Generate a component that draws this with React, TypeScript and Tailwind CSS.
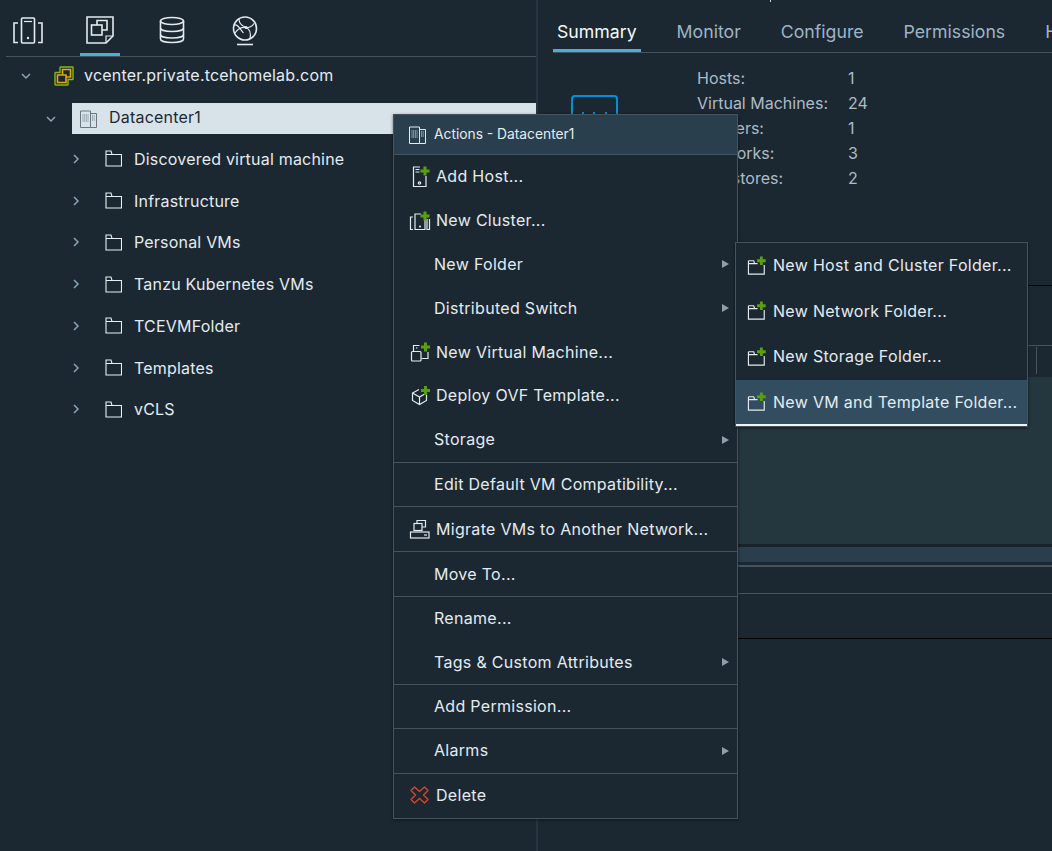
import type { ReactNode } from 'react'

function GreenPlus({ x, y }: { x: number; y: number }) {
  return <path d={`M${x - 4.5} ${y}h9M${x} ${y - 4.5}v9`} stroke="#5c9e12" strokeWidth="3" fill="none" />
}

function HostsTabIcon() {
  return (
    <svg width="32" height="28" viewBox="0 0 32 28" fill="none" stroke="#e4eaee" strokeWidth="1.6">
      <rect x="9.5" y="1" width="13" height="25" rx="1" />
      <path d="M12 4.5h8" strokeWidth="1.2" />
      <circle cx="16" cy="21" r="1.2" fill="#e4eaee" stroke="none" />
      <path d="M6 6H2v19.5h4M26 6h4v19.5h-4" />
    </svg>
  )
}

function VmsTabIcon() {
  return (
    <svg width="28" height="28" viewBox="0 0 28 28" fill="none" stroke="#e4eaee" strokeWidth="1.6">
      <path d="M1 1h26v19l-7 7H1z" />
      <path d="M27 20h-7v7" strokeWidth="1.2" />
      <path d="M11 9V4.5h10V14h-5" />
      <rect x="5.5" y="9" width="10.5" height="10" />
    </svg>
  )
}

function StorageTabIcon() {
  return (
    <svg width="26" height="28" viewBox="0 0 26 28" fill="none" stroke="#e4eaee" strokeWidth="1.6">
      <ellipse cx="13" cy="5" rx="11.5" ry="3.5" />
      <path d="M1.5 5v18c0 2 5 3.5 11.5 3.5S24.500 25 24.500 23V5" />
      <path d="M1.500 12c0 2 5 3.500 11.500 3.500S24.500 14 24.500 12M1.500 18.500c0 2 5 3.500 11.500 3.500s11.500-1.500 11.500-3.500" />
    </svg>
  )
}

function NetworkTabIcon() {
  return (
    <svg width="26" height="30" viewBox="0 0 26 30" fill="none" stroke="#e4eaee" strokeWidth="1.6">
      <circle cx="13" cy="12.500" r="11.500" />
      <path d="M3 17c2-3 6-6 11-5.500 4 .5 6-1 8-4M7 3c0 4 3 7 7 8.500s5 6 4 11.500M2.500 9c3-1 5 3 9 8" strokeWidth="1.200" />
      <circle cx="14" cy="11.500" r="1.600" fill="#e4eaee" stroke="none" />
      <path d="M5 28.500h16" />
    </svg>
  )
}

function VcenterIcon() {
  return (
    <svg width="20" height="20" viewBox="0 0 20 20" fill="none">
      <path
        d="M6.500 1h12a.5.5 0 0 1 .5.5V13a.5.5 0 0 1-.5.5H14v5a.5.5 0 0 1-.5.5H1.500a.5.5 0 0 1-.5-.5V7a.5.5 0 0 1 .5-.5H6V1.500z"
        stroke="#84b816"
        strokeWidth="1.400"
      />
      <path d="M3.500 9h8.500v7.500H3.500zM8.500 9V3.500h8v7.500H12" stroke="#e6a512" strokeWidth="1.600" />
    </svg>
  )
}

function DatacenterIcon({ color }: { color: string }) {
  return (
    <svg width="17" height="18" viewBox="0 0 17 18" fill="none" stroke={color} strokeWidth="1">
      <path d="M.5 1h10v16.500H.5zM10.500 3.500h6v14h-6" />
      <path d="M2.500 5h6M2.500 7h6M2.500 9h6M2.500 11h6M12 6h3M12 8h3M12 10h3" strokeDasharray="1 .7" />
    </svg>
  )
}

function TreeFolderIcon() {
  return (
    <svg width="17" height="17" viewBox="0 0 17 17" fill="none" stroke="#e8eef2" strokeWidth="1.100">
      <path d="M1 1h5l1 3.500h9.500V16H1zM1 4.500h6" />
    </svg>
  )
}

function Chevron({ open }: { open?: boolean }) {
  return (
    <svg width="10" height="10" viewBox="0 0 10 10" fill="none" stroke="#8aa3b5" strokeWidth="1.500">
      {open ? <path d="M1 3l4 4 4-4" /> : <path d="M3 1l4 4-4 4" />}
    </svg>
  )
}

function AddHostIcon() {
  return (
    <svg width="24" height="24" viewBox="0 0 24 24" fill="none" stroke="#e4eaee" strokeWidth="1.200">
      <path d="M11 2H4.500v19.500h12.500V11" />
      <path d="M6.500 4.500h4M6.500 7h4" strokeWidth="1" />
      <circle cx="10.500" cy="18" r="1.200" />
      <GreenPlus x={16} y={6} />
    </svg>
  )
}

function NewClusterIcon() {
  return (
    <svg width="24" height="24" viewBox="0 0 24 24" fill="none" stroke="#e4eaee" strokeWidth="1.200">
      <path d="M12 5H6v15.500h10V11" />
      <circle cx="11" cy="17.500" r="1" fill="#e4eaee" stroke="none" />
      <path d="M4 8H1.500v12.500H4M18 10v10.500h2.500V10" />
      <GreenPlus x={16} y={7} />
    </svg>
  )
}

function NewVmIcon() {
  return (
    <svg width="24" height="24" viewBox="0 0 24 24" fill="none" stroke="#e4eaee" strokeWidth="1.200">
      <path d="M4.500 11V5.500h6M19 12v6.500h-6.500" />
      <rect x="2.500" y="11.500" width="9.500" height="9.500" rx="1" />
      <path d="M7 8h1.500" />
      <GreenPlus x={16.500} y={7} />
    </svg>
  )
}

function DeployOvfIcon() {
  return (
    <svg width="24" height="24" viewBox="0 0 24 24" fill="none" stroke="#e4eaee" strokeWidth="1.200">
      <path d="M10 5.500 3.500 9v7.500l7 4 7-4V11" />
      <path d="M3.500 9l7 4 7-4M10.500 13v7.500" />
      <GreenPlus x={16.500} y={6.500} />
    </svg>
  )
}

function MigrateIcon() {
  return (
    <svg width="24" height="24" viewBox="0 0 24 24" fill="none" stroke="#e4eaee" strokeWidth="1.200">
      <path d="M8 6.500v-3h8.500V10H13" />
      <rect x="5" y="6.500" width="8" height="7" />
      <rect x="1.500" y="15" width="18.500" height="6" />
      <path d="M15 18h3" />
    </svg>
  )
}

function DeleteIcon() {
  return (
    <svg width="24" height="24" viewBox="0 0 24 24" fill="none" stroke="#d9432b" strokeWidth="1.400">
      <path d="M5.500 4 10.500 8.500 15.500 4 19 7.500 14.500 12 19 16.500 15.500 20 10.500 15.500 5.500 20 2 16.500 6.500 12 2 7.500z" strokeLinejoin="round" />
    </svg>
  )
}

function NewFolderIcon() {
  return (
    <svg width="24" height="24" viewBox="0 0 24 24" fill="none" stroke="#e4eaee" strokeWidth="1.200">
      <path d="M1.500 6.500h5.500l1 3h3M1.500 6.500v14h16.500V11M1.500 9.500h6.500" />
      <GreenPlus x={15} y={6.500} />
    </svg>
  )
}

function DatacenterBadge() {
  return (
    <svg className="absolute left-[18px] top-[42px]" width="47" height="60" viewBox="0 0 47 60" fill="none" stroke="#0091da" strokeWidth="2">
      <rect x="1" y="1" width="45" height="58" rx="3" />
      <path d="M12 17v3M23 17v3M35 17v3" />
    </svg>
  )
}

function SubArrow() {
  return (
    <svg className="absolute right-[7px]" width="9" height="10" viewBox="0 0 9 10">
      <path d="M1 1l7 4-7 4z" fill="#8f9ea8" />
    </svg>
  )
}

type MenuRow = { label: string; icon?: ReactNode; sub?: boolean; h: string }

const groups: { rows: MenuRow[]; line: string }[] = [
  {
    line: 'h-px',
    rows: [
      { label: 'Add Host...', icon: <AddHostIcon />, h: 'h-[43.8px]' },
      { label: 'New Cluster...', icon: <NewClusterIcon />, h: 'h-[43.8px]' },
      { label: 'New Folder', sub: true, h: 'h-[43.8px]' },
      { label: 'Distributed Switch', sub: true, h: 'h-[43.8px]' },
      { label: 'New Virtual Machine...', icon: <NewVmIcon />, h: 'h-[43.8px]' },
      { label: 'Deploy OVF Template...', icon: <DeployOvfIcon />, h: 'h-[43.8px]' },
      { label: 'Storage', sub: true, h: 'h-[43.8px]' },
    ],
  },
  { line: 'h-[1.5px]', rows: [{ label: 'Edit Default VM Compatibility...', h: 'h-[43.4px]' }] },
  { line: 'h-[1.5px]', rows: [{ label: 'Migrate VMs to Another Network...', icon: <MigrateIcon />, h: 'h-[43.4px]' }] },
  { line: 'h-px', rows: [{ label: 'Move To...', h: 'h-[43.6px]' }] },
  {
    line: 'h-px',
    rows: [
      { label: 'Rename...', h: 'h-[43.4px]' },
      { label: 'Tags & Custom Attributes', sub: true, h: 'h-[43.4px]' },
    ],
  },
  { line: 'h-px', rows: [{ label: 'Add Permission...', h: 'h-[43.4px]' }] },
  { line: 'h-px', rows: [{ label: 'Alarms', sub: true, h: 'h-[43.4px]' }] },
  { line: 'h-0', rows: [{ label: 'Delete', icon: <DeleteIcon />, h: 'h-[43.4px]' }] },
]

const folders = ['Discovered virtual machine', 'Infrastructure', 'Personal VMs', 'Tanzu Kubernetes VMs', 'TCEVMFolder', 'Templates', 'vCLS']

const stats = [
  ['Hosts:', '1'],
  ['Virtual Machines:', '24'],
  ['Clusters:', '1'],
  ['Networks:', '3'],
  ['Datastores:', '2'],
]

const tabs = ['Summary', 'Monitor', 'Configure', 'Permissions', 'Hosts']

const subItems = ['New Host and Cluster Folder...', 'New Network Folder...', 'New Storage Folder...']

export default function App() {
  return (
    <div className="relative flex h-[851px] w-[1052px] overflow-hidden bg-[#1b2832] [font-family:Inter,sans-serif] text-[16px] tracking-[0.2px] text-[#e3ebf0]">
      <aside className="w-[536px] shrink-0">
        <div className="ml-[6px] flex h-[57px] border-b border-[#46535d] pl-[6px]">
          <div className="flex w-[68px] items-start pt-[17px]">
            <HostsTabIcon />
          </div>
          <div className="flex h-[56px] w-[40px] items-start justify-center border-b-[3px] border-[#49afd9] pt-[16px]">
            <VmsTabIcon />
          </div>
          <div className="ml-[39px] w-[62px] pt-[16px]">
            <StorageTabIcon />
          </div>
          <div className="ml-[11px] pt-[16px]">
            <NetworkTabIcon />
          </div>
        </div>

        <div className="flex h-[37px] items-center pl-[21px]">
          <Chevron open />
          <div className="ml-[23px] mr-[10px]">
            <VcenterIcon />
          </div>
          <span className="pb-[2px]">vcenter.private.tcehomelab.com</span>
        </div>

        <div className="mt-[9px] flex h-[31px] items-center">
          <div className="ml-[46px] w-[26px]">
            <Chevron open />
          </div>
          <div className="flex h-full flex-1 items-center bg-[#d8e3e9] pl-[8px] text-[#1b2832]">
            <DatacenterIcon color="#6a7680" />
            <span className="ml-[12px] pb-[3px]">Datacenter1</span>
          </div>
        </div>

        <div className="mt-[4px]">
          {folders.map((name) => (
            <div key={name} className="flex h-[41.75px] items-center pl-[71px]">
              <Chevron />
              <div className="ml-[24px] mr-[12px] flex">
                <TreeFolderIcon />
              </div>
              <span>{name}</span>
            </div>
          ))}
        </div>
      </aside>

      <div className="w-[2px] shrink-0 bg-[#263640]" />

      <main className="min-w-0 flex-1 pl-[15px]">
        <div className="flex h-[53px] items-end gap-[40px] border-b border-[#46535d] text-[17.7px] tracking-normal text-[#9fb4c5]">
          {tabs.map((tab, i) => (
            <div key={tab} className={i === 0 ? '-mr-[4px] flex h-[33px] items-start border-b-[3px] border-[#49afd9] px-[4px] text-[#f4f8fa]' : 'flex h-[33px] items-start'}>
              {tab}
            </div>
          ))}
        </div>

        <div className="relative h-[232px] pl-[144px] pt-[12px] tracking-normal text-[#adbbc6]">
          <DatacenterBadge />
          {stats.map(([label, value]) => (
            <div key={label} className="flex h-[25px] items-center">
              <span className="w-[151px]">{label}</span>
              <span>{value}</span>
            </div>
          ))}
        </div>

        <div className="h-[60px] border-t border-black" />
        <div className="flex h-[32px] justify-end border-t border-[#46535d]">
          <div className="mr-[15px] mt-[1px] h-[27px] w-px bg-[#46535d]" />
        </div>
        <div className="h-[167px] bg-[#24363e]" />
        <div className="h-[3px] bg-[#172229]" />
        <div className="h-[15px] bg-[#2a3e4d]" />
        <div className="h-[3px]" />
        <div className="h-[2px] bg-[#46535d]" />
        <div className="h-[27px] border-b border-[#46535d]" />
        <div className="h-[45px] border-b border-black" />
      </main>

      <div className="absolute left-[770px] top-0 h-[2px] w-px bg-[#c5d0d6]" />

      <div className="absolute left-[393px] top-[114px] h-[705px] w-[345px] border border-[#46535d] bg-[#1b2832] tracking-[0.3px] shadow-[0_1px_3px_rgba(0,0,0,0.5)]">
        <div className="flex h-[40px] items-center gap-[8px] border-b border-[#46535d] bg-[#2a3f4d] pl-[15px] text-[13.8px] tracking-normal">
          <DatacenterIcon color="#e4eaee" />
          <span>Actions - Datacenter1</span>
        </div>
        {groups.map((group, g) => (
          <div key={g}>
            {group.rows.map((row) => (
              <div key={row.label} className={`relative flex items-center ${row.h}`}>
                {row.icon ? (
                  <>
                    <div className="ml-[15px] mr-[3px] flex w-[24px]">{row.icon}</div>
                    <span className="pb-[1px]">{row.label}</span>
                  </>
                ) : (
                  <span className="ml-[40px] pb-[1px]">{row.label}</span>
                )}
                {row.sub && <SubArrow />}
              </div>
            ))}
            <div className={`bg-[#46535d] ${group.line}`} />
          </div>
        ))}
      </div>

      <div className="absolute left-[735px] top-[242px] w-[293px] border border-[#46535d] bg-[#1b2832] tracking-[0.3px] shadow-[0_1px_3px_rgba(0,0,0,0.5)]">
        {subItems.map((label) => (
          <div key={label} className="flex h-[45.600px] items-center">
            <div className="ml-[11px] mr-[3px] flex w-[23px]">
              <NewFolderIcon />
            </div>
            <span className="pb-[1px]">{label}</span>
          </div>
        ))}
        <div className="flex h-[46px] items-center border-b-2 border-[#eef3f6] bg-[#324d60]">
          <div className="ml-[11px] mr-[3px] flex w-[23px]">
            <NewFolderIcon />
          </div>
          <span>New VM and Template Folder...</span>
        </div>
      </div>
    </div>
  )
}
